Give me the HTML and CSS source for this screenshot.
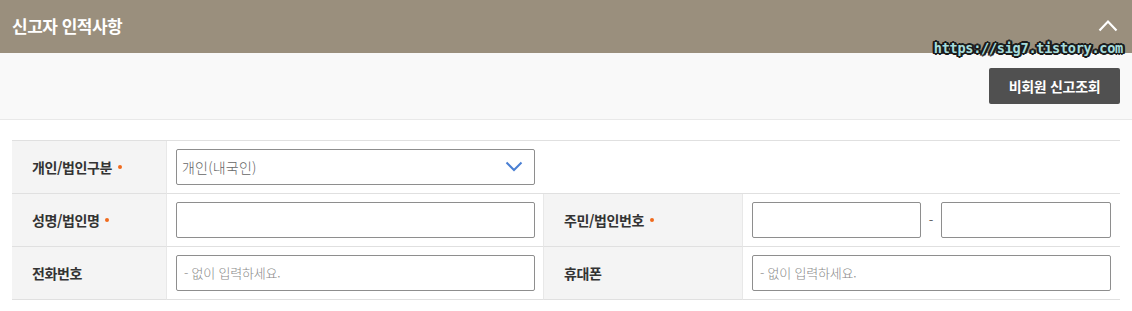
FILE: index.html
```html
<!DOCTYPE html>
<html lang="ko">
<head>
<meta charset="utf-8">
<link rel="stylesheet" href="styles.css">
</head>
<body>
<div class="panel-head">
  <h2 class="panel-title">신고자 인적사항</h2>
  <svg class="toggle" width="22" height="14" viewBox="0 0 22 14"><polyline points="2.5,12.5 11,3.5 19.5,12.5" fill="none" stroke="#fff" stroke-width="2.2"/></svg>
  <div class="watermark">https://sig7.tistory.com</div>
</div>
<div class="toolbar">
  <button class="btn-dark">비회원 신고조회</button>
</div>
<div class="form-grid">
  <div class="lbl">개인/법인구분<span class="req"></span></div>
  <div class="val span3">
    <div class="select">
      <span>개인(내국인)</span>
      <svg width="18" height="11" viewBox="0 0 18 11"><polyline points="1.5,1.5 9,9 16.5,1.5" fill="none" stroke="#4a7fd3" stroke-width="2"/></svg>
    </div>
  </div>

  <div class="lbl">성명/법인명<span class="req"></span></div>
  <div class="val"><div class="input"></div></div>
  <div class="lbl lbl2">주민/법인번호<span class="req"></span></div>
  <div class="val val2">
    <div class="input half"></div>
    <span class="dash">-</span>
    <div class="input half2"></div>
  </div>

  <div class="lbl">전화번호</div>
  <div class="val"><div class="input"><span class="ph">- 없이 입력하세요.</span></div></div>
  <div class="lbl lbl2">휴대폰</div>
  <div class="val val2"><div class="input wide"><span class="ph">- 없이 입력하세요.</span></div></div>
</div>
</body>
</html>
```

FILE: styles.css
```css
* { box-sizing: border-box; }
body {
  margin: 0;
  background: #fff;
  font-family: "Noto Sans CJK KR", "Noto Sans", sans-serif;
  color: #333;
}
.panel-head {
  position: relative;
  height: 53px;
  background: #9a8f7d;
  display: flex;
  align-items: center;
  justify-content: space-between;
  padding: 0 13px 0 12px;
}
.panel-title {
  margin: 0;
  font-size: 17px;
  font-weight: 700;
  color: #fff;
  letter-spacing: -0.5px;
  position: relative;
  top: -1px;
}
.toggle { position: relative; top: -2px; }
.watermark {
  position: absolute;
  right: 9px;
  top: 40px;
  font-family: "DejaVu Sans Mono", monospace;
  font-weight: 700;
  font-size: 13.6px;
  letter-spacing: -0.3px;
  color: #a6dcdc;
  text-shadow: -2px 0 #1c1c1c, 2px 0 #1c1c1c, 0 -2px #1c1c1c, 0 2px #1c1c1c,
    -1px -1px #1c1c1c, 1px 1px #1c1c1c, -1px 1px #1c1c1c, 1px -1px #1c1c1c,
    -2px -1px #1c1c1c, 2px 1px #1c1c1c, -2px 1px #1c1c1c, 2px -1px #1c1c1c;
  z-index: 2;
}
.toolbar {
  height: 67px;
  background: #f9f9f9;
  border-bottom: 1px solid #e9e9e9;
  display: flex;
  justify-content: flex-end;
  padding: 15px 12px 0 0;
}
.btn-dark {
  width: 131px;
  height: 36px;
  background: #505050;
  color: #fff;
  border: none;
  border-radius: 2px;
  font-family: inherit;
  font-size: 14px;
  font-weight: 700;
  letter-spacing: -0.3px;
}
.form-grid {
  margin: 20px 12px 0 12px;
  display: grid;
  grid-template-columns: 155px 376px 200px 377px;
  border-top: 1px solid #e0e0e0;
}
.lbl, .val {
  height: 53px;
  border-bottom: 1px solid #e0e0e0;
  display: flex;
  align-items: center;
}
.lbl {
  background: #f4f4f4;
  padding-left: 20px;
  font-size: 14px;
  font-weight: 700;
  color: #333;
  letter-spacing: -0.4px;
  border-right: 1px solid #e8e8e8;
}
.lbl2 { padding-left: 20px; border-left: 1px solid #e8e8e8; }
.req {
  display: inline-block;
  width: 4px;
  height: 4px;
  border-radius: 50%;
  background: #f06a1c;
  margin-left: 6px;
}
.val {
  padding: 0 0 1px 9px;
}
.span3 { grid-column: span 3; }
.select, .input {
  height: 36px;
  border: 1px solid #8e8e8e;
  border-radius: 2px;
  background: #fff;
  display: flex;
  align-items: center;
}
.select {
  width: 359px;
  justify-content: space-between;
  padding: 0 11px 0 5px;
  font-size: 14px;
  font-weight: 300;
  color: #666;
  letter-spacing: 0.2px;
}
.input { width: 359px; padding-left: 7px; }
.half { width: 169px; }
.half2 { width: 170px; }
.wide { width: 359px; }
.dash {
  width: 20px;
  text-align: center;
  font-size: 13px;
  color: #666;
}
.ph {
  font-size: 13px;
  font-weight: 300;
  color: #888;
  letter-spacing: -0.2px;
}
```
